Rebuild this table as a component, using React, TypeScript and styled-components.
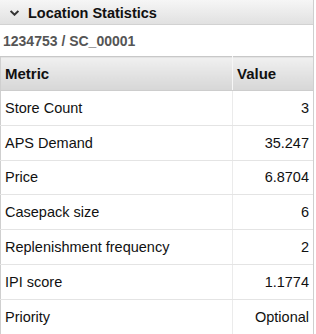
import { FC } from 'react';
import styled, { createGlobalStyle } from 'styled-components';

const Global = createGlobalStyle`
    body {
        margin: 0;
        background: #fff;
        font-family: "Liberation Sans", Arial, sans-serif;
    }
`;

const rows: [string, string][] = [
    ['Store Count', '3'],
    ['APS Demand', '35.247'],
    ['Price', '6.8704'],
    ['Casepack size', '6'],
    ['Replenishment frequency', '2'],
    ['IPI score', '1.1774'],
    ['Priority', 'Optional'],
];

const App: FC = () => <>
    <Global />
    <Panel>
        <TitleBar>
            <Chevron width="9" height="6" viewBox="0 0 9 6">
                <path d="M0.6 0.9 L4.5 4.7 L8.4 0.9" fill="none" stroke="#333" strokeWidth="2" />
            </Chevron>
            <Title>Location Statistics</Title>
        </TitleBar>
        <SubTitle>1234753 / SC_00001</SubTitle>
        <Table>
            <thead>
                <tr>
                    <HeadCell>Metric</HeadCell>
                    <HeadCell $value>Value</HeadCell>
                </tr>
            </thead>
            <tbody>
                {rows.map(([metric, value]) =>
                    <tr key={metric}>
                        <Cell>{metric}</Cell>
                        <Cell $value>{value}</Cell>
                    </tr>
                )}
            </tbody>
        </Table>
    </Panel>
</>;

const Panel = styled.div`
    width: 314px;
    box-sizing: border-box;
    border-right: 1px solid #cfcfcf;
`;

const TitleBar = styled.div`
    height: 25px;
    padding-top: 1px;
    box-sizing: border-box;
    display: flex;
    align-items: center;
    padding-left: 10px;
    background: linear-gradient(#f6f6f6, #e1e1e1);
    border-bottom: 1px solid #d2d2d2;
`;

const Chevron = styled.svg`
    margin-right: 9px;
    margin-top: 1px;
`;

const Title = styled.span`
    font-size: 14.5px;
    font-weight: bold;
    color: #111;
`;

const SubTitle = styled.div`
    height: 31px;
    display: flex;
    align-items: center;
    padding-left: 3px;
    font-size: 14px;
    font-weight: bold;
    color: #555;
`;

const Table = styled.table`
    width: 100%;
    border-collapse: collapse;
    border-top: 1px solid #c8c8c8;
    border-left: 1px solid #cfcfcf;
    font-size: 14.5px;
    color: #111;
`;

const HeadCell = styled.th<{ $value?: boolean }>`
    height: 33px;
    padding: 0 4px;
    text-align: left;
    font-weight: bold;
    font-size: 15px;
    width: ${p => p.$value ? '72px' : 'auto'};
    background: linear-gradient(#f0f0f0, #d6d6d6);
    border-bottom: 1px solid #cdcdcd;
    border-left: ${p => p.$value ? '1px solid #f6f6f6' : 'none'};
`;

const Cell = styled.td<{ $value?: boolean }>`
    height: 33.8px;
    padding: 0 4px;
    text-align: ${p => p.$value ? 'right' : 'left'};
    border-bottom: 1px solid #e4e4e4;
    border-left: ${p => p.$value ? '1px solid #ebebeb' : 'none'};
`;

export default App;
